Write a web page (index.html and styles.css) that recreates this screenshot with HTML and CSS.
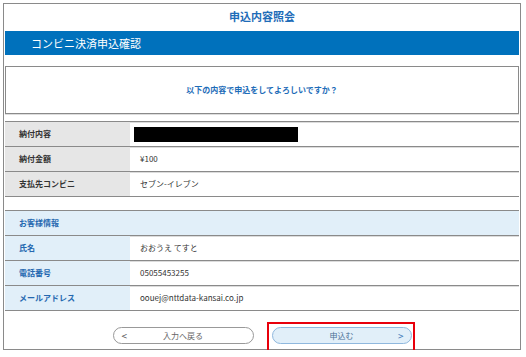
FILE: index.html
```html
<!DOCTYPE html>
<html lang="ja">
<head>
  <meta charset="UTF-8" />
  <meta name="viewport" content="width=device-width, initial-scale=1.0"/>
  <title>申込内容照会</title>
  <link rel="stylesheet" href="styles.css">
</head>
<body>
  <div class="frame">
    <h1 class="page-title">申込内容照会</h1>
    <h2 class="section-bar">コンビニ決済申込確認</h2>

    <div class="notice">以下の内容で申込をしてよろしいですか？</div>

    <div class="info-table">
      <div class="row">
        <div class="label">納付内容</div>
        <div class="value"><span class="redacted"></span></div>
      </div>
      <div class="row">
        <div class="label">納付金額</div>
        <div class="value">¥100</div>
      </div>
      <div class="row">
        <div class="label">支払先コンビニ</div>
        <div class="value">セブン-イレブン</div>
      </div>
    </div>

    <div class="info-table customer">
      <div class="row head">
        <div class="label">お客様情報</div>
      </div>
      <div class="row">
        <div class="label">氏名</div>
        <div class="value">おおうえ てすと</div>
      </div>
      <div class="row">
        <div class="label">電話番号</div>
        <div class="value">05055453255</div>
      </div>
      <div class="row">
        <div class="label">メールアドレス</div>
        <div class="value">oouej@nttdata-kansai.co.jp</div>
      </div>
    </div>

    <div class="actions">
      <button class="btn btn-back"><span class="arrow">&lt;</span>入力へ戻る</button>
      <button class="btn btn-submit">申込む<span class="arrow">&gt;</span><span class="highlight"></span></button>
    </div>
  </div>
</body>
</html>
```

FILE: styles.css
```css
body {
  margin: 0;
  background: #fff;
  font-family: "Noto Sans CJK JP", "Noto Sans", sans-serif;
  color: #333;
}

.frame {
  margin: 3px 0 0 3px;
  width: 514px;
  height: 345px;
  padding: 0 1px;
  border: 1px solid #8a8a8a;
  display: flex;
  flex-direction: column;
}

.page-title {
  margin: 0;
  height: 27px;
  line-height: 24px;
  text-align: center;
  font-size: 11px;
  font-weight: bold;
  color: #1e6cb8;
}

.section-bar {
  margin: 0;
  height: 24px;
  line-height: 24px;
  padding-left: 26px;
  background: #0071bc;
  color: #fff;
  font-size: 11px;
  font-weight: normal;
}

.notice {
  margin-top: 11px;
  height: 46px;
  line-height: 46px;
  border: 1px solid #8a8a8a;
  box-shadow: 0 1px 0 #ddd;
  text-align: center;
  font-size: 8px;
  font-weight: bold;
  color: #1e6cb8;
}

.info-table {
  margin-top: 7px;
  border-bottom: 1px solid #8a8a8a;
}

.info-table.customer {
  margin-top: 13px;
}

.row {
  display: grid;
  grid-template-columns: 125px 1fr;
  height: 24px;
  border-top: 1px solid #8a8a8a;
  box-shadow: inset 0 1px 0 #dcdcdc;
  font-size: 8px;
}

.label {
  background: #e6e6e6;
  padding-left: 14px;
  line-height: 24px;
  font-weight: bold;
  color: #333;
}

.value {
  padding-left: 10px;
  line-height: 24px;
  color: #333;
}

.redacted {
  display: inline-block;
  width: 164px;
  height: 15px;
  margin-left: -6px;
  vertical-align: middle;
  background: #000;
}

.customer .label {
  background: #e1eff9;
  color: #2568b0;
}

.customer .head {
  grid-template-columns: 1fr;
  background: #e1eff9;
}

.actions {
  display: flex;
  justify-content: center;
  gap: 18px;
  margin-top: 16px;
}

.btn {
  position: relative;
  width: 141px;
  height: 17px;
  border-radius: 9px;
  font-family: inherit;
  font-size: 8px;
  padding: 0;
  color: #666;
  background: #fff;
  border: 1px solid #999;
}

.btn .arrow {
  position: absolute;
  top: 0;
  font-size: 10px;
  color: #555;
}

.btn-back .arrow {
  left: 8px;
}

.btn-submit {
  width: 140px;
  background: #e1eff9;
  border-color: #8fb8de;
  color: #4a6f96;
}

.btn-submit .arrow {
  right: 7px;
  color: #3b78b8;
}

.highlight {
  position: absolute;
  left: -6px;
  top: -6px;
  width: 144px;
  height: 28px;
  border: 2px solid #e8000b;
}
```
